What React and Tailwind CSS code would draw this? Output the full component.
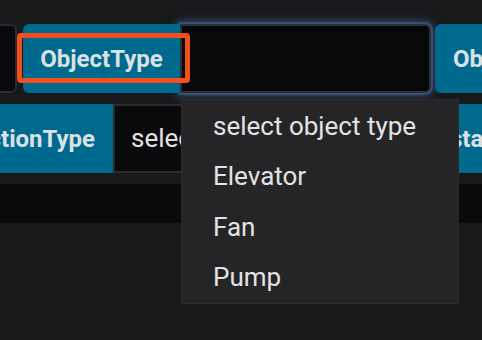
import React from "react";

const options = ["select object type", "Elevator", "Fan", "Pump"];

const Label = ({ children, className = "" }) => (
    <div className={`h-full shrink-0 flex items-center bg-[#00698e] text-[#dbe1e5] text-[24px] font-bold whitespace-nowrap ${className}`}>
        {children}
    </div>
);

export default function App() {
    return (
        <div className="relative w-[482px] h-[340px] overflow-hidden bg-[#18191b] font-['Roboto',sans-serif]">
            <div className="flex flex-col gap-[11px] pt-[24px]">
                {/* row 1 */}
                <div className="flex h-[69px]">
                    <div className="h-full w-[120px] -ml-[103px] shrink-0 rounded-[6px] border-2 border-[#2b2c2f] bg-[#0a0a0c]" />
                    <Label className="relative ml-[6px] w-[157px] justify-center rounded-l-[6px]">
                        ObjectType
                        <div className="absolute left-[-6px] top-[9px] w-[173px] h-[50px] rounded-[4px] border-[5px] border-[#f24e1e]" />
                    </Label>
                    <div className="h-full w-[251px] shrink-0 rounded-r-[6px] border-2 border-[#2e3034] bg-[#08080a] shadow-[0_0_0_2px_rgba(60,95,150,0.6),0_0_9px_3px_rgba(80,120,185,0.5)]" />
                    <Label className="ml-[4px] w-[150px] pl-[18px] rounded-l-[6px]">ObjectName</Label>
                </div>

                {/* row 2 */}
                <div className="flex h-[69px]">
                    <Label className="w-[200px] -ml-[87px] justify-end pr-[18px]">ConnectionType</Label>
                    <div className="h-full w-[326px] shrink-0 flex items-center pl-[16px] border-2 border-[#2a2b2d] bg-[#0a0a0c] text-[26px] text-[#e2e2e2] whitespace-nowrap">
                        select object type
                    </div>
                    <Label className="w-[150px] pl-[11px]">status</Label>
                </div>

                {/* row 3 */}
                <div className="h-[39px] bg-[#0a0a0c]" />
            </div>

            {/* open select menu */}
            <div className="absolute left-[181px] top-[99px] w-[278px] h-[205px] pt-[1px] bg-[#252527] border border-[#2c2c2f]">
                {options.map((opt) => (
                    <div key={opt} className="h-[50.5px] flex items-center pl-[31px] text-[26px] text-[#e3e3e3] whitespace-nowrap">
                        {opt}
                    </div>
                ))}
            </div>
        </div>
    );
}
